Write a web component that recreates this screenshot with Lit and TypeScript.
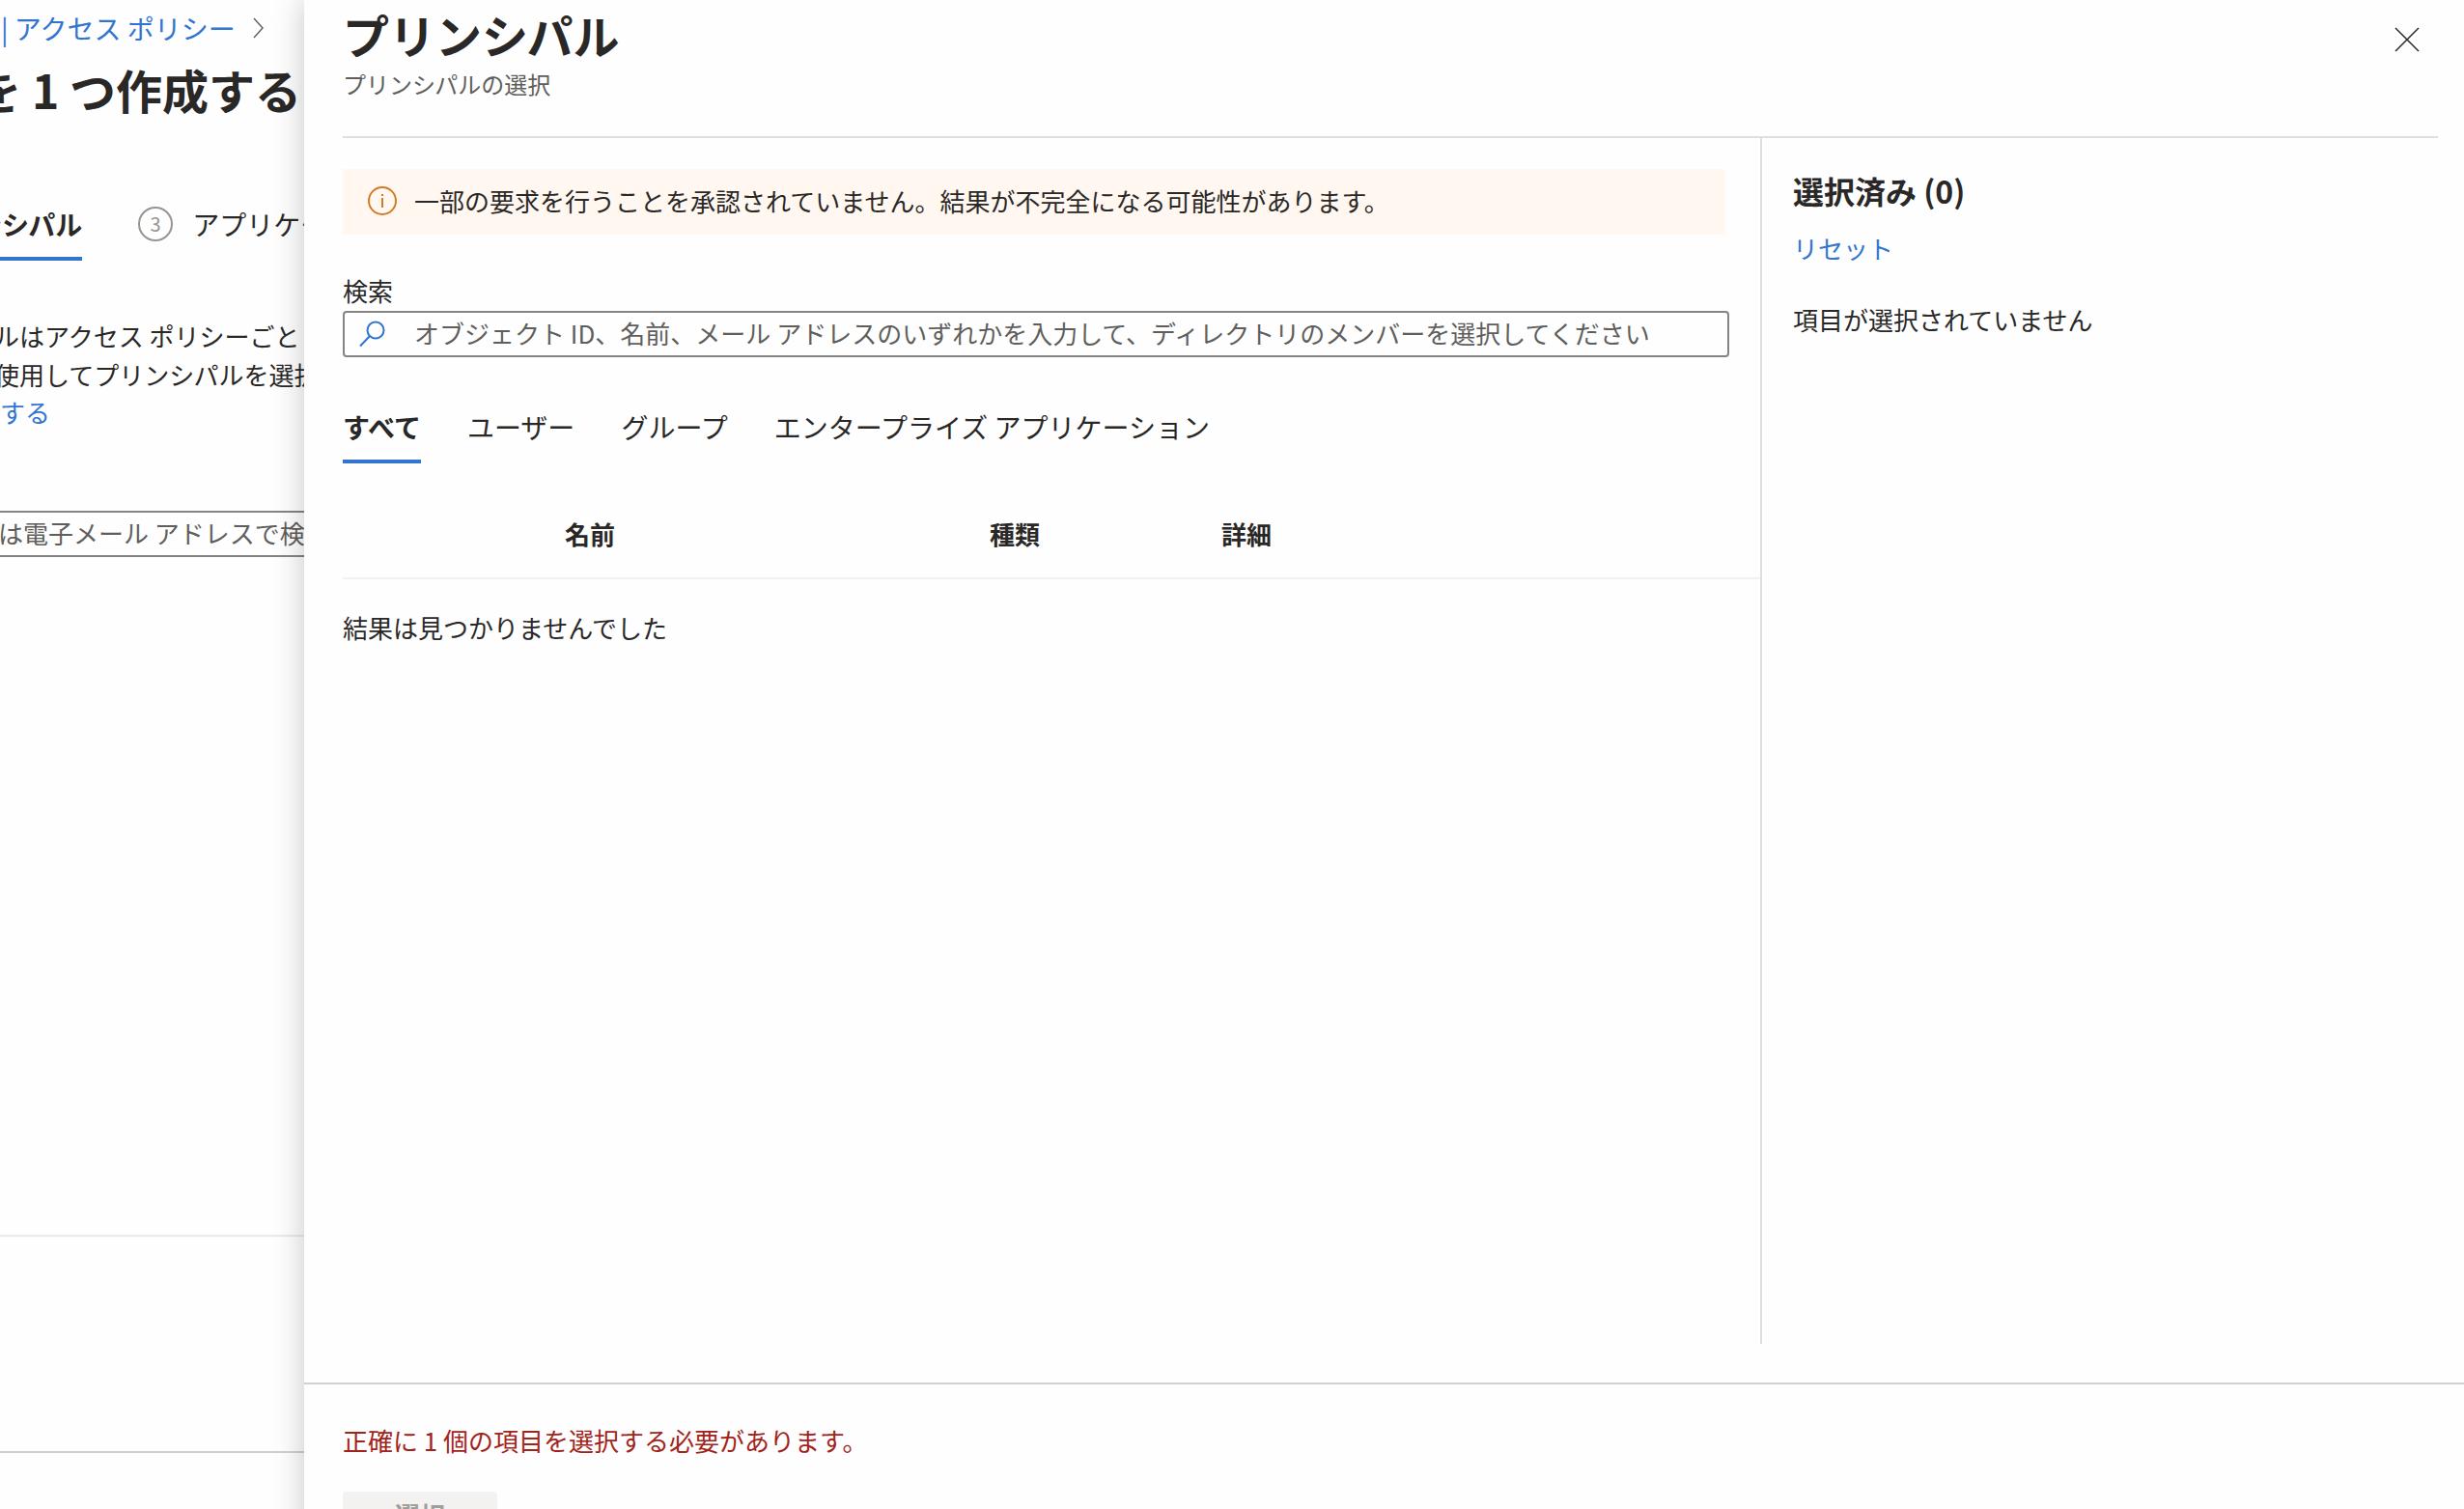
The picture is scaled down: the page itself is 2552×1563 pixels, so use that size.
import { LitElement, html, css, svg } from "lit";
import { customElement, state } from "lit/decorators.js";

const tabs = ["すべて", "ユーザー", "グループ", "エンタープライズ アプリケーション"];

const chevronIcon = svg`<path d="M1 1 L10 11 L1 21" fill="none" stroke="currentColor" stroke-width="1.4"/>`;
const closeIcon = svg`<path d="M1 1 L25 25 M25 1 L1 25" fill="none" stroke="currentColor" stroke-width="1.5"/>`;
const infoIcon = svg`
  <circle cx="15" cy="15" r="14" fill="none" stroke="currentColor" stroke-width="2"/>
  <rect x="14" y="8" width="2" height="2" fill="currentColor"/>
  <rect x="14" y="12" width="2" height="10" fill="currentColor"/>`;
const searchIcon = svg`
  <circle cx="17" cy="10" r="8.5" fill="none" stroke="currentColor" stroke-width="2"/>
  <path d="M11 16 L1 26.500" fill="none" stroke="currentColor" stroke-width="2"/>`;

const base = css`
  :host {
    box-sizing: border-box;
    font-family: "Noto Sans CJK JP", sans-serif;
    font-size: 26px;
    line-height: 40px;
    color: #292827;
  }
  *, *::before, *::after { box-sizing: border-box; }
  h1, h2, p { margin: 0; }
  button, input { font: inherit; color: inherit; }
  button { border: 0; padding: 0; background: none; cursor: pointer; }
  a { color: #3275d1; text-decoration: none; }
  svg { display: block; flex: none; }
`;

@customElement("policy-page")
export class PolicyPage extends LitElement {
  static styles = [
    base,
    css`
      :host {
        display: flex;
        flex-direction: column;
        min-width: 0;
        overflow: hidden;
        white-space: nowrap;
      }
      .crumbs {
        display: flex;
        align-items: center;
        gap: 18px;
        height: 58px;
        padding-left: 1px;
        font-size: 28px;
      }
      .crumbs svg { color: #605e5c; }
      .title {
        margin-left: -26px;
        font-size: 48px;
        line-height: 68px;
        font-weight: 700;
      }
      .steps { display: flex; gap: 58px; margin: 68px 0 0 -26px; height: 76px; }
      .step {
        display: flex;
        align-items: center;
        gap: 20px;
        padding-top: 4px;
        border-bottom: 4px solid transparent;
        font-size: 28px;
      }
      .step.current { border-color: #3275d1; font-weight: 700; }
      .number {
        display: grid;
        place-items: center;
        width: 36px;
        height: 36px;
        border: 2px solid #979593;
        border-radius: 50%;
        font-size: 20px;
        line-height: 28px;
        color: #979593;
      }
      .note { margin: 58px 0 0 -6px; }
      .more { height: 40px; margin-top: -1px; }
      .search {
        margin: 82px 0 0 -4px;
        height: 48px;
        width: 400px;
        padding: 0 0 4px;
        border: 2px solid #868483;
        background: transparent;
      }
      .search::placeholder { color: #605e5c; opacity: 1; }
      .results {
        flex: 1;
        border-bottom: 2px solid #eaeaea;
      }
      .actions { height: 224px; border-bottom: 2px solid #d0d0d0; }
      .foot { height: 58px; }
    `,
  ];

  render() {
    return html`
      <nav class="crumbs">
        <a href="#policies">| アクセス ポリシー</a>
        <svg width="12" height="22" viewBox="0 0 12 22" aria-hidden="true">${chevronIcon}</svg>
      </nav>
      <h1 class="title">を 1 つ作成する</h1>
      <div class="steps">
        <button class="step current">ンシパル</button>
        <button class="step"><span class="number">3</span>アプリケー</button>
      </div>
      <p class="note">ルはアクセス ポリシーごと<br />使用してプリンシパルを選択</p>
      <a class="more" href="#more">する</a>
      <input class="search" aria-label="検索" placeholder="は電子メール アドレスで検索" />
      <div class="results"></div>
      <div class="actions"></div>
      <div class="foot"></div>
    `;
  }
}

@customElement("principal-panel")
export class PrincipalPanel extends LitElement {
  @state() private active = 0;

  static styles = [
    base,
    css`
      :host {
        display: flex;
        flex-direction: column;
        height: calc(100vh + 48px);
        min-width: 0;
        background: #fefefe;
        box-shadow: 0 0 30px rgba(0, 0, 0, 0.22);
      }
      .head {
        display: flex;
        justify-content: space-between;
        align-items: flex-start;
        height: 143px;
        margin: 0 27px 0 40px;
        border-bottom: 2px solid #dfdfdf;
      }
      .title { font-size: 48px; line-height: 70px; font-weight: 700; }
      .subtitle { font-size: 24px; line-height: 34px; color: #605e5c; }
      .close { margin: 28px 19px 0 0; }
      .body {
        flex: 1;
        display: grid;
        grid-template-columns: 21fr 10fr;
        margin: 0 27px 40px 40px;
      }
      .main { border-right: 2px solid #dfdfdf; padding-top: 32px; min-width: 0; }
      .alert {
        display: flex;
        align-items: center;
        gap: 18px;
        height: 68px;
        margin-right: 36px;
        padding: 0 26px 2px;
        background: #fff7f0;
      }
      .alert svg { color: #d47a28; }
      .label { display: block; margin-top: 38px; }
      .box {
        display: flex;
        align-items: center;
        gap: 29px;
        height: 48px;
        margin: 1px 32px 0 0;
        padding: 0 15px;
        border: 2px solid #868483;
        border-radius: 4px;
      }
      .box svg { color: #3275d1; }
      .field {
        flex: 1;
        min-width: 0;
        height: 44px;
        padding: 0 0 4px;
        border: 0;
        outline: 0;
        background: transparent;
      }
      .field::placeholder { color: #605e5c; opacity: 1; }
      .tabs { display: flex; gap: 48px; margin-top: 36px; }
      .tab {
        height: 74px;
        padding-top: 2px;
        border-bottom: 4px solid transparent;
        font-size: 28px;
      }
      .tab.active { border-color: #3275d1; font-weight: 700; }
      .grid { width: 100%; margin-top: 27px; border-collapse: collapse; table-layout: fixed; }
      .grid th { height: 92px; padding: 0; text-align: left; font-weight: 700; border-bottom: 2px solid #f1f1f1; }
      .pick { width: 230px; }
      .name { width: 440px; }
      .kind { width: 240px; }
      .grid td { padding: 30px 0 0; }
      .side { padding: 30px 0 0 32px; }
      .side-title { font-size: 32px; line-height: 48px; font-weight: 700; }
      .reset { display: block; margin-top: 16px; }
      .none { margin-top: 34px; }
      .foot {
        display: flex;
        flex-direction: column;
        align-items: flex-start;
        gap: 33px;
        padding: 38px 40px 18px;
        border-top: 2px solid #d0d0d0;
      }
      .error { color: #a3231a; }
      .select {
        width: 160px;
        height: 48px;
        border-radius: 4px;
        background: #f3f2f1;
        color: #a19f9d;
        font-weight: 700;
      }
    `,
  ];

  render() {
    return html`
      <header class="head">
        <div>
          <h1 class="title">プリンシパル</h1>
          <p class="subtitle">プリンシパルの選択</p>
        </div>
        <button class="close" aria-label="閉じる">
          <svg width="26" height="26" viewBox="0 0 26 26" aria-hidden="true">${closeIcon}</svg>
        </button>
      </header>
      <div class="body">
        <section class="main">
          <div class="alert" role="status">
            <svg width="30" height="30" viewBox="0 0 30 30" aria-hidden="true">${infoIcon}</svg>
            <span>一部の要求を行うことを承認されていません。結果が不完全になる可能性があります。</span>
          </div>
          <label class="label" for="search">検索</label>
          <div class="box">
            <svg width="28" height="28" viewBox="0 0 28 28" aria-hidden="true">${searchIcon}</svg>
            <input
              class="field"
              id="search"
              type="text"
              placeholder="オブジェクト ID、名前、メール アドレスのいずれかを入力して、ディレクトリのメンバーを選択してください"
            />
          </div>
          <div class="tabs" role="tablist">
            ${tabs.map(
              (name, i) => html`<button
                class="tab ${i === this.active ? "active" : ""}"
                role="tab"
                aria-selected=${i === this.active ? "true" : "false"}
                @click=${() => (this.active = i)}
              >${name}</button>`
            )}
          </div>
          <table class="grid">
            <thead>
              <tr>
                <th class="pick"></th>
                <th class="name">名前</th>
                <th class="kind">種類</th>
                <th>詳細</th>
              </tr>
            </thead>
            <tbody>
              <tr><td colspan="4">結果は見つかりませんでした</td></tr>
            </tbody>
          </table>
        </section>
        <aside class="side">
          <h2 class="side-title">選択済み (0)</h2>
          <a class="reset" href="#reset">リセット</a>
          <p class="none">項目が選択されていません</p>
        </aside>
      </div>
      <footer class="foot">
        <p class="error">正確に 1 個の項目を選択する必要があります。</p>
        <button class="select" disabled>選択</button>
      </footer>
    `;
  }
}

@customElement("app-root")
export class AppRoot extends LitElement {
  static styles = css`
    :host {
      display: grid;
      grid-template-columns: 315px minmax(0, 1fr);
      grid-template-rows: 100vh;
      height: 100vh;
      overflow: hidden;
      background: #fefefe;
    }
  `;

  render() {
    return html`<policy-page></policy-page><principal-panel></principal-panel>`;
  }
}
